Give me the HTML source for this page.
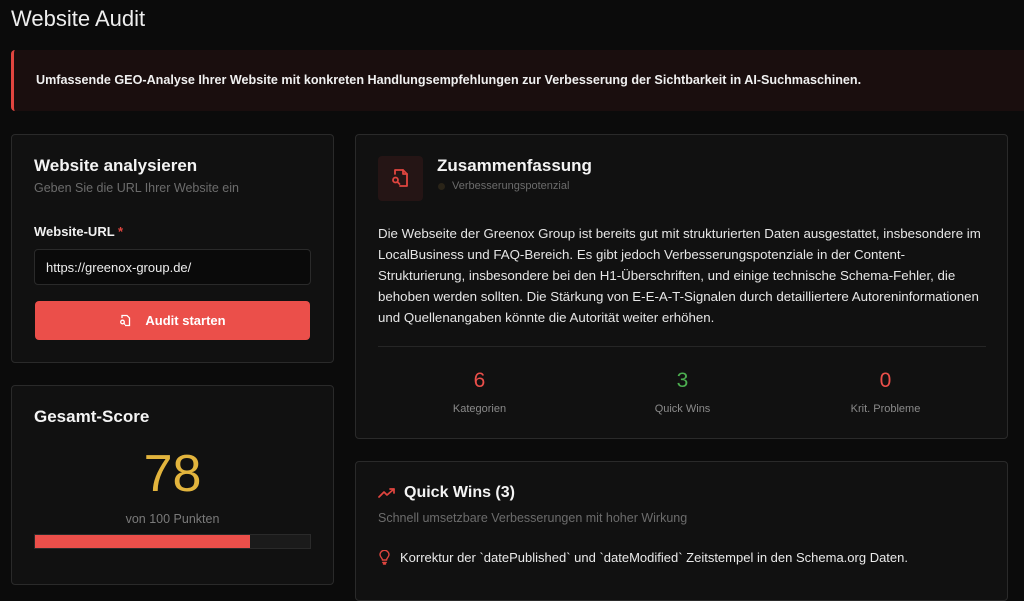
<!DOCTYPE html>
<html><head><meta charset="utf-8"><style>
*{box-sizing:border-box;margin:0;padding:0}
body{width:1024px;height:572px;overflow:hidden;background:#0b0b0b;font-family:"Liberation Sans",sans-serif;color:#f2f2f2;position:relative}
.abs{position:absolute}
.card{position:absolute;background:#111111;border:1px solid #2a2a2a;border-radius:4px}
h1{position:absolute;left:11px;top:6px;font-size:22px;font-weight:400;color:#eee}
.banner{left:11px;top:50px;width:1013px;height:61px;background:#1a0e0e;border-left:3px solid #e0453f;border-radius:4px 0 0 4px;}
.banner p{position:absolute;left:22px;top:23px;font-size:12.6px;font-weight:700;color:#f0f0f0}
.t{font-size:17px;font-weight:700;color:#f4f4f4}
.s{font-size:12.5px;color:#6c6c6c}
</style></head><body>
<h1>Website Audit</h1>
<div class="abs banner"><p>Umfassende GEO-Analyse Ihrer Website mit konkreten Handlungsempfehlungen zur Verbesserung der Sichtbarkeit in AI-Suchmaschinen.</p></div>

<div class="card" style="left:11px;top:134px;width:323px;height:229px">
 <div class="abs t" style="left:22px;top:21px">Website analysieren</div>
 <div class="abs s" style="left:22px;top:46px">Geben Sie die URL Ihrer Website ein</div>
 <div class="abs" style="left:22px;top:89px;font-size:13px;font-weight:700">Website-URL <span style="color:#e0453f">*</span></div>
 <div class="abs" style="left:22px;top:114px;width:277px;height:36px;background:#0a0a0a;border:1px solid #2a2a2a;border-radius:4px;font-size:13px;padding:10px 11px;color:#eee">https://greenox-group.de/</div>
 <div class="abs" style="left:23px;top:166px;width:275px;height:39px;background:#eb4f4a;border-radius:4px;font-size:13px;font-weight:700;color:#fff;text-align:center;line-height:39px">
  <svg width="12" height="13" viewBox="0 0 12 13" style="vertical-align:-2px;margin-right:14px" fill="none" stroke="#fff" stroke-width="1.3"><path d="M3 4V1.5h5l2.5 2.5v7.5H6"/><circle cx="3.5" cy="8" r="1.8"/><path d="M5 9.5l1.2 1.2"/></svg>Audit starten</div>
</div>

<div class="card" style="left:11px;top:385px;width:323px;height:200px">
 <div class="abs t" style="left:22px;top:21px">Gesamt-Score</div>
 <div class="abs" style="left:0;width:321px;top:58px;text-align:center;font-size:52px;color:#e2b43d">78</div>
 <div class="abs s" style="left:0;width:321px;top:126px;text-align:center;color:#7a7a7a">von 100 Punkten</div>
 <div class="abs" style="left:22px;top:148px;width:277px;height:15px;background:#1b1b1b;border:1px solid #2a2a2a"><div style="width:78%;height:100%;background:#eb4f4a"></div></div>
</div>

<div class="card" style="left:355px;top:134px;width:653px;height:305px">
 <div class="abs" style="left:22px;top:21px;width:45px;height:45px;background:#251515;border-radius:4px">
  <svg class="abs" style="left:11px;top:11px" width="22" height="22" viewBox="0 0 22 22" fill="none" stroke="#e0453f" stroke-width="1.8" stroke-linecap="round" stroke-linejoin="round"><path d="M6 7V3h8l4 4v12h-7"/><path d="M14 3v4h4"/><circle cx="6.5" cy="13" r="2.5"/><path d="M8.5 15l2 2"/></svg>
 </div>
 <div class="abs t" style="left:81px;top:21px">Zusammenfassung</div>
 <div class="abs" style="left:82px;top:48px;width:7px;height:7px;border-radius:50%;background:#2a2418"></div>
 <div class="abs" style="left:96px;top:45px;font-size:11px;color:#6c6c6c">Verbesserungspotenzial</div>
 <div class="abs" style="left:22px;top:88px;width:612px;font-size:13.3px;line-height:21px;color:#e6e6e6">Die Webseite der Greenox Group ist bereits gut mit strukturierten Daten ausgestattet, insbesondere im LocalBusiness und FAQ-Bereich. Es gibt jedoch Verbesserungspotenziale in der Content-<br>Strukturierung, insbesondere bei den H1-Überschriften, und einige technische Schema-Fehler, die behoben werden sollten. Die Stärkung von E-E-A-T-Signalen durch detailliertere Autoreninformationen und Quellenangaben könnte die Autorität weiter erhöhen.</div>
 <div class="abs" style="left:22px;top:211px;width:608px;height:1px;background:#262626"></div>
 <div class="abs" style="left:22px;top:234px;width:203px;text-align:center;font-size:21px;color:#eb4f4a">6</div>
 <div class="abs" style="left:22px;top:268px;width:203px;text-align:center;font-size:11px;color:#8a8a8a">Kategorien</div>
 <div class="abs" style="left:225px;top:234px;width:203px;text-align:center;font-size:21px;color:#4caf50">3</div>
 <div class="abs" style="left:225px;top:268px;width:203px;text-align:center;font-size:11px;color:#8a8a8a">Quick Wins</div>
 <div class="abs" style="left:428px;top:234px;width:203px;text-align:center;font-size:21px;color:#eb4f4a">0</div>
 <div class="abs" style="left:428px;top:268px;width:203px;text-align:center;font-size:11px;color:#8a8a8a">Krit. Probleme</div>
</div>

<div class="card" style="left:355px;top:461px;width:653px;height:140px">
 <svg class="abs" style="left:22px;top:25px" width="18" height="12" viewBox="0 0 18 12" fill="none" stroke="#e0453f" stroke-width="1.7" stroke-linecap="round" stroke-linejoin="round"><path d="M1 10l5-5 3 3 7-6"/><path d="M12 2h4v4"/></svg>
 <div class="abs t" style="left:48px;top:22px;font-size:16px">Quick Wins (3)</div>
 <div class="abs s" style="left:22px;top:49px">Schnell umsetzbare Verbesserungen mit hoher Wirkung</div>
 <svg class="abs" style="left:23px;top:88px" width="11" height="15" viewBox="0 0 11 15" fill="none" stroke="#e0453f" stroke-width="1.4" stroke-linecap="round"><path d="M3.5 10C3.5 8 1 7 1 4.8a4.5 4.5 0 0 1 9 0C10 7 7.5 8 7.5 10z"/><path d="M3.8 12.5h3.4M4.5 14h2"/></svg>
 <div class="abs" style="left:44px;top:88px;font-size:13px;color:#eaeaea">Korrektur der `datePublished` und `dateModified` Zeitstempel in den Schema.org Daten.</div>
</div>
</body></html>
